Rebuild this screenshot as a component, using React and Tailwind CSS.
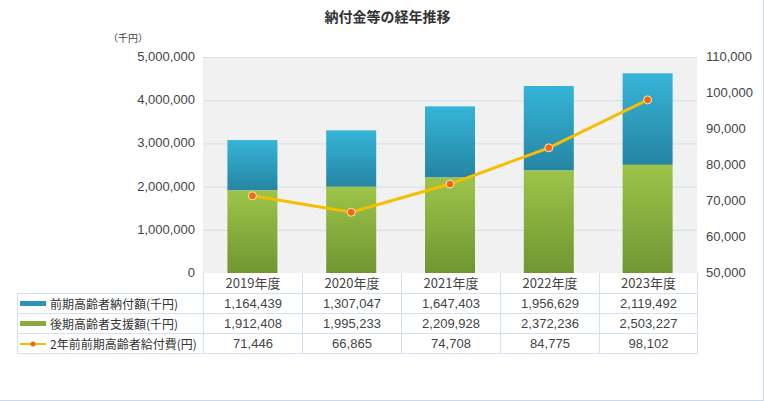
const years = ['2019年度', '2020年度', '2021年度', '2022年度', '2023年度'];
const zenki = [1164439, 1307047, 1647403, 1956629, 2119492];
const kouki = [1912408, 1995233, 2209928, 2372236, 2503227];
const kyufu = [71446, 66865, 74708, 84775, 98102];
const fmt = (n) => n.toLocaleString('en-US');

const W = 494;
const H = 216;
const cw = W / 5;
const yl = (v) => H - (v / 5000000) * H;
const yr = (v) => H - ((v - 50000) / 60000) * H;

function Plot() {
  const pts = kyufu.map((v, i) => [cw * i + cw / 2, yr(v)]);
  return (
    <svg width={W} height={H} className="block">
      <defs>
        <linearGradient id="blue" x1="0" y1="0" x2="0" y2="1">
          <stop offset="0" stopColor="#36b4d8" />
          <stop offset="1" stopColor="#2585a2" />
        </linearGradient>
        <linearGradient id="green" x1="0" y1="0" x2="0" y2="1">
          <stop offset="0" stopColor="#9dc449" />
          <stop offset="1" stopColor="#6f9631" />
        </linearGradient>
      </defs>
      <rect width={W} height={H} fill="#f1f1f1" />
      {[0, 1, 2, 3, 4].map((i) => (
        <line key={i} x1="0" x2={W} y1={i * 43.2 + 0.5} y2={i * 43.2 + 0.5} stroke="#cfe0f0" />
      ))}
      {years.map((_, i) => {
        const x = cw * i + cw / 2 - 25;
        const gTop = yl(kouki[i]);
        const bTop = yl(kouki[i] + zenki[i]);
        return (
          <g key={i}>
            <rect x={x} y={bTop} width="50" height={gTop - bTop} fill="url(#blue)" />
            <rect x={x} y={gTop} width="50" height={H - gTop} fill="url(#green)" />
          </g>
        );
      })}
      <polyline points={pts.map((p) => p.join(',')).join(' ')} fill="none" stroke="#f7bd00" strokeWidth="3" />
      {pts.map(([x, y], i) => (
        <circle key={i} cx={x} cy={y} r="4" fill="#f26a10" stroke="#fbe3c8" strokeWidth="1" />
      ))}
    </svg>
  );
}

function Swatch({ kind }) {
  if (kind === 'line')
    return (
      <svg width="26" height="8" className="mr-1">
        <line x1="0" x2="26" y1="4" y2="4" stroke="#f7bd00" strokeWidth="2" />
        <circle cx="13" cy="4" r="2.5" fill="#f26a10" />
      </svg>
    );
  return <span className={`mr-1 inline-block h-[5px] w-[26px] ${kind === 'blue' ? 'bg-[#2b95b8]' : 'bg-[#86ac3c]'}`} />;
}

const rows = [
  { kind: 'blue', label: '前期高齢者納付額(千円)', data: zenki },
  { kind: 'green', label: '後期高齢者支援額(千円)', data: kouki },
  { kind: 'line', label: '2年前前期高齢者給付費(円)', data: kyufu },
];

export default function App() {
  return (
    <div
      className="h-[401px] w-[764px] border-r border-b border-[#c8d8ec] bg-white text-[#444]"
      style={{ fontFamily: '"Noto Sans CJK JP", "Liberation Sans", sans-serif' }}
    >
      <div className="pt-[6px] text-center text-[14px] font-bold text-[#333] pl-[12px]">納付金等の経年推移</div>
      <div className="pl-[108px] text-[10px] leading-[14px] mt-[4px]">（千円）</div>
      <div className="mt-[12px] flex">
        <div className="flex h-[216px] w-[203px] flex-col justify-between pr-[8px] text-right text-[13px]" style={{ fontFamily: '"Liberation Sans", sans-serif' }}>
          {['5,000,000', '4,000,000', '3,000,000', '2,000,000', '1,000,000', '0'].map((t, i) => (
            <div key={t} className={`leading-[16px] ${i === 0 ? '-mt-[8px]' : ''} ${i === 5 ? '-mb-[8px]' : ''}`}>{t}</div>
          ))}
        </div>
        <Plot />
        <div className="flex h-[216px] flex-col justify-between pl-[9px] text-[13px]" style={{ fontFamily: '"Liberation Sans", sans-serif' }}>
          {['110,000', '100,000', '90,000', '80,000', '70,000', '60,000', '50,000'].map((t, i) => (
            <div key={t} className={`leading-[16px] ${i === 0 ? '-mt-[8px]' : ''} ${i === 6 ? '-mb-[8px]' : ''}`}>{t}</div>
          ))}
        </div>
      </div>
      <div className="ml-[17px] grid w-[681px] grid-cols-[186px_repeat(5,99px)] border-b border-[#d3e0ee] text-[13px]">
        <div />
        {years.map((y, i) => (
          <div key={y} className={`flex h-[20px] items-center justify-center border-l border-[#d3e0ee] ${i === 4 ? 'border-r' : ''}`}>{y}</div>
        ))}
        {rows.map((r) => (
          <>
            <div key={r.label} className="flex h-[20px] items-center border-t border-l border-[#d3e0ee] pl-[2px] text-[12px] text-[#333]">
              <Swatch kind={r.kind} />
              {r.label}
            </div>
            {r.data.map((v, i) => (
              <div key={r.label + i} className={`flex h-[20px] items-center justify-center border-t border-l border-[#d3e0ee] ${i === 4 ? 'border-r' : ''}`} style={{ fontFamily: '"Liberation Sans", sans-serif' }}>
                {fmt(v)}
              </div>
            ))}
          </>
        ))}
      </div>
    </div>
  );
}
